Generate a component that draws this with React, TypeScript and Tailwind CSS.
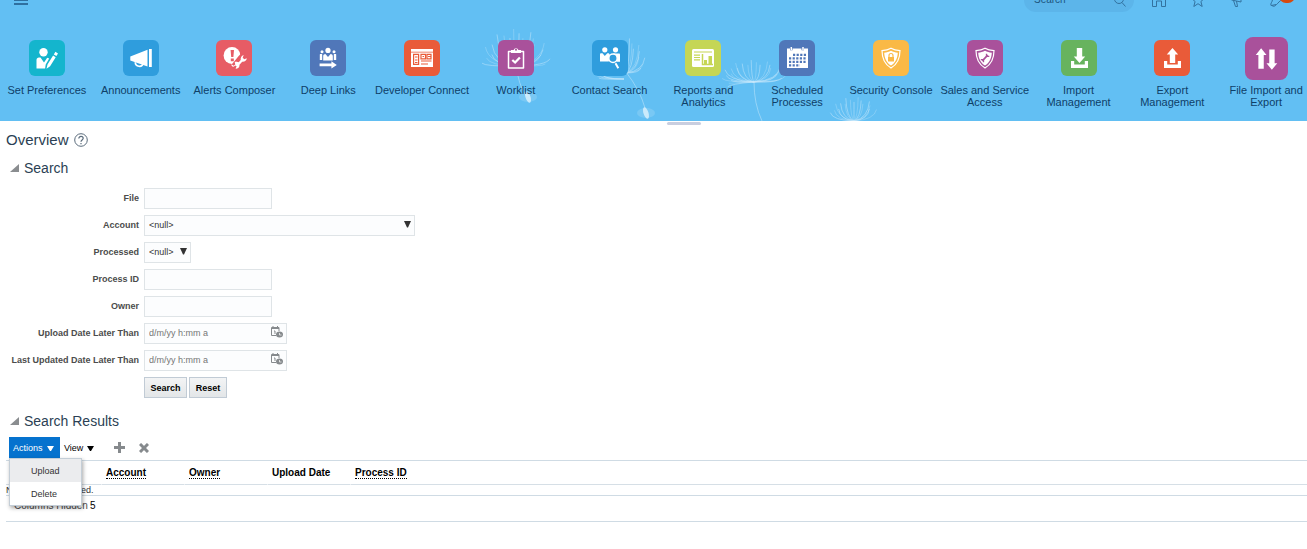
import { useState } from 'react'
import type { ReactNode } from 'react'

type NavItem = { label: string[]; tile: string; glyph: ReactNode; active?: boolean }

const NAV_ITEMS: NavItem[] = [
  {
    label: ['Set Preferences'],
    tile: 'bg-[#14b5cd]',
    glyph: (
      <>
        <circle cx="14.5" cy="12.3" r="4.2" />
        <path d="M7.5 28.5V20c0-1.6 1-2.6 2.5-2.6h1.5l3.5 5 3.2-4.6 2 .8-3.5 6-.6 3.9z" />
        <path d="M17.5 28.8l1-4.3 5.6-9 2.6 1.7-5.6 9zM24.8 14.4l1.6-2.6 2.6 1.7-1.6 2.6z" />
      </>
    ),
  },
  {
    label: ['Announcements'],
    tile: 'bg-[#2f9ddd]',
    glyph: (
      <>
        <path d="M7.3 16.5L24.5 9.8v16.6L7.3 20.6zM26 9h2.8v18H26z" />
        <path d="M12.3 22.3c0 5 7 5 7.6 1.6" fill="none" stroke="#fff" strokeWidth="1.7" />
      </>
    ),
  },
  {
    label: ['Alerts Composer'],
    tile: 'bg-[#e75c65]',
    glyph: (
      <>
        <circle cx="16" cy="15.5" r="8.4" />
        <path d="M14.6 10h3.4l-.6 7h-2.2zM14.8 18.4h3v2.8h-3z" fill="#e75c65" />
        <path d="M17.5 26.5l3-3.6 4-4.8 2.4-2.5" stroke="#e75c65" strokeWidth="5.5" fill="none" />
        <path d="M15.3 24.3l2.5 1.5 1.5-1.2-.6-2.6c2.2-.5 3.5.3 4 .2l2-2.3c-.3-2 .6-4.2 3-4.9l-1 2.8 1.6 1.4 2.5-.9c-.2 2.3-2.2 3.8-4.6 3.5l-2.7 3c.3 2.5-1.5 4.3-4 3.8l1.1-2-.9-1-2.4 1.2c-1.2-.3-1.9-1.2-2-2.5z" />
      </>
    ),
  },
  {
    label: ['Deep Links'],
    tile: 'bg-[#5077b9]',
    glyph: (
      <>
        <circle cx="18" cy="10.4" r="2.6" />
        <path d="M13.2 20.5v-4.6c0-1.2 1-2 2.2-2l2.6 3 2.6-3c1.2 0 2.2.8 2.2 2v4.6z" />
        <circle cx="12" cy="11.8" r="1.5" />
        <circle cx="24" cy="11.8" r="1.5" />
        <path d="M9.8 14.5c0-.6 2.400-.6 2.400 0v5.500H9.800zM23.800 14.500c0-.6 2.400-.6 2.400 0v5.500h-2.400z" />
        <path d="M9.600 26.200v-2.600h11.800v-2.300l5.400 3.600-5.400 3.600v-2.300z" />
      </>
    ),
  },
  {
    label: ['Developer Connect'],
    tile: 'bg-[#e95b39]',
    glyph: (
      <>
        <path d="M7 9h22v2.800H7zM7 12.600h22V27H7z" />
        <path
          d="M9.600 14.300h5v10h-5zM17 14.300h4.500v4.500H17zM23 14.300h4v4.500h-4zM17 21h10.500M17 24h7"
          fill="none"
          stroke="#e95b39"
          strokeWidth="1.200"
        />
        <path d="M11 17h2.500M11 20h2.500M11 22.500h2.500M18.500 16.500h1.500M24 16.500h3" stroke="#e95b39" strokeWidth="1.200" />
      </>
    ),
  },
  {
    label: ['Worklist'],
    tile: 'bg-[#a9519b]',
    glyph: (
      <>
        <path d="M10.500 11.500h15v16.500h-15z" fill="none" stroke="#fff" strokeWidth="1.500" strokeLinejoin="round" />
        <path d="M13 10h2.600a2.500 2.500 0 0 1 4.800 0H23v3H13z" />
        <circle cx="18" cy="9.800" r="1" fill="#a9519b" />
        <path d="M14.300 20l2.800 2.500 4.800-5" fill="none" stroke="#fff" strokeWidth="2.300" />
      </>
    ),
  },
  {
    label: ['Contact Search'],
    tile: 'bg-[#2f9ddd]',
    glyph: (
      <>
        <circle cx="12.800" cy="9.800" r="2.600" />
        <circle cx="23.500" cy="9.800" r="2.600" />
        <path d="M8 21.500v-7c0-.7.500-1.200 1.200-1.200h1.300l2.300 2.700 2.500-2.700h1.500l1 1.200-1 7zM21 13.500h6c.600 0 1 .500 1 1.200v7h-3z" />
        <circle cx="21" cy="18.200" r="4.200" fill="#2f9ddd" stroke="#fff" strokeWidth="1.500" />
        <path d="M23.500 23.200l2.800 5" stroke="#fff" strokeWidth="2" />
      </>
    ),
  },
  {
    label: ['Reports and', 'Analytics'],
    tile: 'bg-[#c5d655]',
    glyph: (
      <>
        <rect x="7" y="9" width="22" height="18" rx="1.500" />
        <path d="M9 12h18M9 15.200h6M9 17.500h6M9 19.800h6" stroke="#c5d655" strokeWidth="1.200" />
        <path d="M17.500 14v10.500H28" fill="none" stroke="#c5d655" strokeWidth="1.500" />
        <path d="M19 20h3v4.500h-3zM23.500 16H27v8.500h-3.500z" fill="#c5d655" />
      </>
    ),
  },
  {
    label: ['Scheduled', 'Processes'],
    tile: 'bg-[#5077b9]',
    glyph: (
      <>
        <path d="M8 8.500h3v1.800h2.500V8.500h9v1.800H25V8.500h4V28H8z" />
        <path d="M12.300 7v3M24 7v3" stroke="#fff" strokeWidth="1.500" />
        <path
          d="M14 14.800h13M10 18.300h17M10 21.800h17M10 25.300h11"
          stroke="#5077b9"
          strokeWidth="2.200"
          strokeDasharray="2.200 1.400"
        />
      </>
    ),
  },
  {
    label: ['Security Console'],
    tile: 'bg-[#fab946]',
    glyph: (
      <>
        <path
          d="M18 8.300c2.800 1.700 5.800 2.200 9 2.300 0 8-2.500 13.800-9 17.400-6.500-3.600-9-9.400-9-17.400 3.200-.1 6.200-.6 9-2.300z"
          fill="none"
          stroke="#fff"
          strokeWidth="1.200"
        />
        <path d="M18 10.800c2.100 1.200 4.400 1.700 6.800 1.900-.3 5.700-2.400 10-6.800 12.800-4.400-2.800-6.500-7.100-6.800-12.800 2.400-.2 4.700-.7 6.800-1.900z" />
        <path d="M15 17h6v4.500h-6z" fill="#fab946" />
        <path d="M16 17v-1.500a2 2 0 0 1 4 0V17" fill="none" stroke="#fab946" strokeWidth="1.200" />
      </>
    ),
  },
  {
    label: ['Sales and Service', 'Access'],
    tile: 'bg-[#a9519b]',
    glyph: (
      <>
        <path
          d="M18 8.300c2.800 1.700 5.800 2.200 9 2.300 0 8-2.500 13.800-9 17.400-6.500-3.600-9-9.400-9-17.400 3.200-.1 6.200-.6 9-2.300z"
          fill="none"
          stroke="#fff"
          strokeWidth="1.200"
        />
        <path d="M18 10.800c2.100 1.200 4.400 1.700 6.800 1.900-.3 5.700-2.400 10-6.800 12.800-4.400-2.800-6.500-7.100-6.800-12.800 2.400-.2 4.700-.7 6.800-1.900z" />
        <path d="M15.300 20.800l5.400-5.600" stroke="#a9519b" strokeWidth="1.700" />
        <path d="M19.500 13.800v2.600h2.800M13.800 19.600h2.700v2.600" fill="none" stroke="#a9519b" strokeWidth="1.300" />
      </>
    ),
  },
  {
    label: ['Import', 'Management'],
    tile: 'bg-[#67b35e]',
    glyph: <path d="M15.800 8h5.400v8.500h3L18.500 23l-5.700-6.500h3zM10 21h3.200v3.500h10.600V21H27v7H10z" />,
  },
  {
    label: ['Export', 'Management'],
    tile: 'bg-[#e95b39]',
    glyph: <path d="M15.800 23V14.500h-3L18.500 8l5.700 6.500h-3V23zM10 21h3.200v3.500h10.600V21H27v7H10z" />,
  },
  {
    label: ['File Import and', 'Export'],
    tile: 'bg-[#a9519b]',
    active: true,
    glyph: <path d="M11.200 26.500V15H9l4.500-5.500L18 15h-2.300v11.500zM20.300 10.500h4.500V22H27l-4.500 5.500L18 22h2.300z" />,
  },
]

// Dandelion seeds floating behind the springboard
const SEEDS = [
  { x: 516, y: 66, rx: 34, ry: 32, from: -184, to: 4, stem: 'M518 76Q521 90 527 96', tip: [528, 97] },
  { x: 626, y: 73, rx: 20, ry: 30, from: -80, to: -5, stem: 'M626 72Q640 90 645 108', tip: [646, 113] },
  { x: 624, y: 79, rx: 29, ry: 8, from: 150, to: 190, stem: '', tip: null },
  { x: 754, y: 82, rx: 32, ry: 17, from: -215, to: 10, stem: 'M754 82Q754 104 762 121', tip: null },
  { x: 854, y: 121, rx: 24, ry: 19, from: -170, to: -20, stem: '', tip: null },
]

function fibre(x: number, y: number, rx: number, ry: number, angle: number) {
  const rad = (angle * Math.PI) / 180
  const dx = Math.cos(rad) * rx
  const dy = Math.sin(rad) * ry
  return `M${x} ${y}q${dx * 0.9} ${dy * 0.2} ${dx} ${dy - 5}`
}

function Dandelions() {
  return (
    <svg
      viewBox="0 0 1307 121"
      preserveAspectRatio="xMidYMid slice"
      className="absolute inset-0 h-full w-full"
      fill="none"
      stroke="#c9e9fb"
      aria-hidden="true"
    >
      {SEEDS.map((seed, i) => {
        const count = Math.round((seed.to - seed.from) / 10)
        return (
          <g key={i}>
            {Array.from({ length: count + 1 }, (_, n) => {
              const scale = 1 - (n % 3) * 0.13
              return (
                <path
                  key={n}
                  d={fibre(seed.x, seed.y, seed.rx * scale, seed.ry * scale, seed.from + n * 10)}
                  strokeWidth="0.9"
                  opacity={n % 2 ? 0.35 : 0.55}
                />
              )
            })}
            {seed.stem && <path d={seed.stem} strokeWidth="1" opacity="0.5" />}
            {seed.tip && (
              <>
                <ellipse cx={seed.tip[0]} cy={seed.tip[1]} rx="9" ry="5" fill="#d8effc" stroke="none" opacity="0.2" />
                <ellipse
                  cx={seed.tip[0]}
                  cy={seed.tip[1]}
                  rx="2.5"
                  ry="6"
                  fill="#e6f5fd"
                  stroke="none"
                  opacity="0.75"
                  transform={`rotate(-18 ${seed.tip[0]} ${seed.tip[1]})`}
                />
              </>
            )}
          </g>
        )
      })}
    </svg>
  )
}

function TopBar() {
  return (
    <div className="relative -mt-3 flex h-6 items-center pr-3 pl-3.5">
      <button type="button" aria-label="Navigator">
        <svg width="14" height="12" viewBox="0 0 14 12" stroke="#2f6f9f" strokeWidth="2" className="block">
          <path d="M0 2h14M0 6h14M0 10h14" />
        </svg>
      </button>
      <div className="ml-auto flex h-6 w-[110px] items-center rounded-full bg-[#5cb5ea] pr-2 pl-2.5">
        <input
          type="text"
          placeholder="Search"
          aria-label="Global search"
          className="w-full min-w-0 text-[10px] text-[#1c557f] outline-none placeholder:text-[#1c557f]"
        />
        <svg width="12" height="14" viewBox="0 0 12 14" fill="none" stroke="#33729f" className="shrink-0">
          <circle cx="5" cy="6" r="4.500" />
          <path d="M8 9.500l3.500 4" />
        </svg>
      </div>
      <div className="flex items-center gap-[25px] pl-[18px] text-[#33729f]">
        <a href="#home" aria-label="Home">
          <svg width="14" height="14" viewBox="0 0 14 14" fill="none" stroke="currentColor" className="block">
            <path d="M.5 6L7 .5 13.500 6v7.500H9.500V8h-5v5.500h-4z" />
          </svg>
        </a>
        <button type="button" aria-label="Favorites">
          <svg width="14" height="14" viewBox="0 0 14 14" fill="none" stroke="currentColor" className="block">
            <path d="M7 1l1.800 4.200 4.500.3-3.400 3 1.300 5L7 10.700l-4.200 2.800 1.300-5-3.400-3 4.500-.3z" />
          </svg>
        </button>
        <button type="button" aria-label="Watchlist">
          <svg width="14" height="14" viewBox="0 0 14 14" fill="none" stroke="currentColor" className="block">
            <path d="M1.500 3L11 1v8L6.500 8l-5-1zM3.500 7.500l2 6h2L6.500 8" />
          </svg>
        </button>
        <button type="button" aria-label="Notifications" className="relative w-[26px]">
          <svg width="14" height="14" viewBox="0 0 14 14" fill="none" stroke="currentColor" className="block">
            <path d="M2 12.500c-1-2 1.500-3.500 1.500-6C4 3 7 1 10 2l3 5c-2.500.5-3.500 3-5.500 4.500zM3 12.500c1 1.500 4 .5 4-1" />
          </svg>
          <span className="absolute -top-1 right-0 h-3.5 w-4 rounded-full bg-[#d64a10]" />
        </button>
      </div>
    </div>
  )
}

function Springboard() {
  return (
    <nav className="relative -mr-1.5 grid grid-cols-[repeat(14,minmax(0,1fr))] pt-6">
      {NAV_ITEMS.map((item) => (
        <a
          key={item.label[0]}
          href="#"
          className="flex flex-col items-center text-center text-[11px] leading-3 whitespace-nowrap text-[#0f4068]"
        >
          <span className="flex h-11 items-center">
            <span
              className={`flex items-center justify-center ${item.tile} ${
                item.active ? 'size-[43px] rounded-lg' : 'size-9 rounded-md'
              }`}
            >
              <svg viewBox="0 0 36 36" fill="#fff" className="size-full" aria-hidden="true">
                {item.glyph}
              </svg>
            </span>
          </span>
          <span className="pt-1">
            {item.label.map((line) => (
              <span key={line} className="block">
                {line}
              </span>
            ))}
          </span>
        </a>
      ))}
    </nav>
  )
}

const CONTROL = 'h-[21px] border border-[#dfe4e7] bg-[#fcfdfe] px-1 text-[9px] text-[#333] outline-none'

function Field({ id, label, children }: { id: string; label: string; children: ReactNode }) {
  return (
    <div className="flex items-center gap-[5px]">
      <label htmlFor={id} className="w-[133px] pb-0.5 text-right font-bold whitespace-nowrap text-[#4c4c4c]">
        {label}
      </label>
      {children}
    </div>
  )
}

function NullSelect({ id, className }: { id: string; className: string }) {
  return (
    <div className={`relative ${className}`}>
      <select id={id} className={`${CONTROL} block w-full appearance-none pb-0.5`}>
        <option>&lt;null&gt;</option>
      </select>
      <svg width="7" height="7" viewBox="0 0 7 7" fill="#333" className="pointer-events-none absolute top-1.5 right-1">
        <path d="M0 0h7L4 6.500H3z" />
      </svg>
    </div>
  )
}

function DateInput({ id }: { id: string }) {
  return (
    <div className="relative w-[143px]">
      <input
        id={id}
        type="text"
        placeholder="d/m/yy h:mm a"
        className={`${CONTROL} block w-full pr-5 pb-0.5 placeholder:text-[#757575]`}
      />
      <button type="button" aria-label="Select date and time" className="absolute top-[3px] right-1">
        <svg width="12" height="12" viewBox="0 0 12 12" fill="none" stroke="#868a8d" className="block">
          <path d="M5 9.500H.5v-8h7.500V5M2 0v2.500M6.500 0v2.500M.5 2.500h7.500" />
          <path d="M3 5h1v3" />
          <ellipse cx="8.500" cy="8.500" rx="3.500" ry="3" fill="#868a8d" stroke="none" />
          <path d="M8.500 7v2h2" stroke="#fff" strokeWidth="0.700" />
        </svg>
      </button>
    </div>
  )
}

function SectionTitle({ children, open, onToggle }: { children: string; open: boolean; onToggle: () => void }) {
  return (
    <h2 className="text-[14px] leading-5 text-[#2b3f54]">
      <button type="button" aria-expanded={open} onClick={onToggle} className="flex items-center gap-[5px] pl-1">
        <svg width="9" height="8" viewBox="0 0 9 8" fill="#8a8d90">
          <path d="M9 0v8H0z" />
        </svg>
        {children}
      </button>
    </h2>
  )
}

const COLUMNS = [
  { label: 'Account', sortable: true },
  { label: 'Owner', sortable: true },
  { label: 'Upload Date', sortable: false },
  { label: 'Process ID', sortable: true },
]

function Caret() {
  return (
    <svg width="7" height="5" viewBox="0 0 7 5" fill="currentColor" className="mt-0.5">
      <path d="M0 0h7L4 5H3z" />
    </svg>
  )
}

function Results() {
  const [menuOpen, setMenuOpen] = useState(true)

  return (
    <>
      <div className="flex h-[21px] items-stretch pl-[3px]">
        <div className="relative">
          <button
            type="button"
            aria-haspopup="menu"
            aria-expanded={menuOpen}
            onClick={() => setMenuOpen(!menuOpen)}
            className="flex h-full w-[51px] items-center gap-1 bg-[#0572ce] pl-1 text-white"
          >
            Actions
            <Caret />
          </button>
          {menuOpen && (
            <div
              role="menu"
              className="absolute top-full left-0 z-10 w-[73px] border border-[#c4ced7] bg-white text-[#333] shadow-[1px_2px_4px_rgba(0,0,0,0.35)]"
            >
              <button type="button" role="menuitem" className="block h-[23px] w-full bg-[#ebecee] pl-[21px] text-left">
                Upload
              </button>
              <button type="button" role="menuitem" className="block h-[23px] w-full pl-[21px] text-left">
                Delete
              </button>
            </div>
          )}
        </div>
        <button type="button" className="flex items-center gap-1 pl-1 text-black">
          View
          <Caret />
        </button>
        <button type="button" aria-label="Add" className="pl-5">
          <svg width="11" height="11" viewBox="0 0 11 11" stroke="#868a8d" strokeWidth="3">
            <path d="M5.500 0v11M0 5.500h11" />
          </svg>
        </button>
        <button type="button" aria-label="Remove" className="pl-3.5">
          <svg width="10" height="10" viewBox="0 0 10 10" stroke="#868a8d" strokeWidth="3">
            <path d="M1 1l8 8M9 1L1 9" />
          </svg>
        </button>
      </div>
      <table className="mt-0.5 w-full table-fixed border-separate border-spacing-0 border-t border-[#cfdbe4] text-left">
        <thead className="text-[10px] text-black">
          <tr>
            <th className="h-6 w-[95px] border-b border-[#d6dfe6]" />
            {COLUMNS.map((col, i) => (
              <th
                key={col.label}
                className={`border-b border-l border-b-[#d6dfe6] border-l-white pl-1 font-bold ${
                  i < COLUMNS.length - 1 ? 'w-[83px]' : ''
                }`}
              >
                <span className={col.sortable ? 'border-b border-dotted border-black' : ''}>{col.label}</span>
              </th>
            ))}
          </tr>
        </thead>
        <tbody>
          <tr>
            <td colSpan={5} className="h-[11px] border-b border-[#cfdbe4] text-[9px] leading-[10px] text-[#333]">
              No search conducted.
            </td>
          </tr>
        </tbody>
      </table>
      <div className="flex h-[26px] items-start gap-1 border-b border-[#cfdbe4] pt-1 pl-2 text-[9px] leading-3 text-[#4c4c4c]">
        <span className="w-[72px] text-[10px] whitespace-nowrap">Columns Hidden</span>
        <span className="text-[10px] text-black">5</span>
      </div>
    </>
  )
}

export default function App() {
  const [searchOpen, setSearchOpen] = useState(true)
  const [resultsOpen, setResultsOpen] = useState(true)

  return (
    <div className="min-h-screen bg-white font-['Liberation_Sans',Arial,sans-serif] text-[9px] leading-3">
      <header className="relative flow-root overflow-hidden bg-[#62bff3] pb-[13px]">
        <Dandelions />
        <TopBar />
        <Springboard />
      </header>
      <div className="flex h-[5px] items-center pl-[51%]">
        <div className="h-[3px] w-[34px] rounded-sm bg-[#c9cedf]" />
      </div>

      <main className="pt-1 pl-1.5">
        <h1 className="flex items-center gap-[5px] text-[15px] leading-5 text-[#2b3f54]">
          Overview
          <button type="button" aria-label="Help">
            <svg width="14" height="14" viewBox="0 0 14 14" fill="none" stroke="#5a6b7b">
              <circle cx="7" cy="7" r="6.300" />
              <path d="M4.800 5.500c0-3 4.400-2.800 4.400-.2C9.200 7 7 7 7 8.700M7 10v1.300" strokeWidth="1.200" />
            </svg>
          </button>
        </h1>

        <div className="pt-2">
          <SectionTitle open={searchOpen} onToggle={() => setSearchOpen(!searchOpen)}>
            Search
          </SectionTitle>
        </div>
        {searchOpen && (
          <form className="flex flex-col gap-1.5 pt-2.5" onSubmit={(e) => e.preventDefault()}>
            <Field id="file" label="File">
              <input id="file" type="text" className={`${CONTROL} w-32`} />
            </Field>
            <Field id="account" label="Account">
              <NullSelect id="account" className="w-[271px]" />
            </Field>
            <Field id="processed" label="Processed">
              <NullSelect id="processed" className="w-[47px]" />
            </Field>
            <Field id="process-id" label="Process ID">
              <input id="process-id" type="text" className={`${CONTROL} w-32`} />
            </Field>
            <Field id="owner" label="Owner">
              <input id="owner" type="text" className={`${CONTROL} w-32`} />
            </Field>
            <Field id="upload-date" label="Upload Date Later Than">
              <DateInput id="upload-date" />
            </Field>
            <Field id="updated-date" label="Last Updated Date Later Than">
              <DateInput id="updated-date" />
            </Field>
            <div className="flex gap-0.5 pl-[138px] font-bold text-black">
              <button
                type="submit"
                className="h-[21px] w-[43px] border border-[#c1cbd5] bg-linear-to-b from-[#f3f4f5] to-[#e3e6e8]"
              >
                Search
              </button>
              <button
                type="reset"
                className="h-[21px] w-[38px] border border-[#c1cbd5] bg-linear-to-b from-[#f3f4f5] to-[#e3e6e8]"
              >
                Reset
              </button>
            </div>
          </form>
        )}

        <div className="pt-[13px] pb-1.5">
          <SectionTitle open={resultsOpen} onToggle={() => setResultsOpen(!resultsOpen)}>
            Search Results
          </SectionTitle>
        </div>
        {resultsOpen && <Results />}
      </main>
    </div>
  )
}
